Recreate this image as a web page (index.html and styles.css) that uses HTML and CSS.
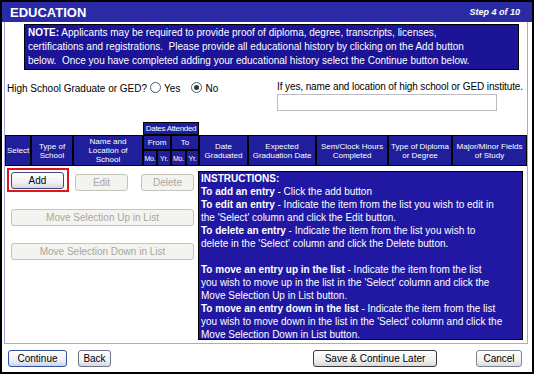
FILE: index.html
```html
<!DOCTYPE html>
<html lang="en">
<head>
  <meta charset="UTF-8">
  <title>Education - Step 4 of 10</title>
  <link rel="stylesheet" href="styles.css">
</head>
<body>
  <div class="frame">
    <div class="title-bar">
      <span class="title">EDUCATION</span>
      <span class="step">Step 4 of 10</span>
    </div>

    <div class="panel">
      <div class="note">
        <b>NOTE:</b> Applicants may be required to provide proof of diploma, degree, transcripts, licenses,<br>
        certifications and registrations.&nbsp; Please provide all educational history by clicking on the Add button<br>
        below.&nbsp; Once you have completed adding your educational history select the Continue button below.
      </div>

      <div class="ged-row">
        <div class="ged-question">
          High School Graduate or GED?<span class="radio"></span>Yes<span class="radio checked"></span>No
        </div>
        <div class="ged-institute">
          <label for="institute">If yes, name and location of high school or GED institute.</label>
          <input type="text" id="institute" class="text-input">
        </div>
      </div>

      <table class="history">
        <colgroup>
          <col style="width:26px"><col style="width:42px"><col style="width:70px">
          <col style="width:14px"><col style="width:14px"><col style="width:15px"><col style="width:13px">
          <col style="width:49px"><col style="width:68px"><col style="width:72px">
          <col style="width:64px"><col style="width:75px">
        </colgroup>
        <tr class="top-row">
          <td colspan="3"></td>
          <th colspan="4" class="dates">Dates Attended</th>
          <td colspan="5"></td>
        </tr>
        <tr class="main-row">
          <th rowspan="2">Select</th>
          <th rowspan="2">Type of<br>School</th>
          <th rowspan="2">Name and<br>Location of<br>School</th>
          <th colspan="2">From</th>
          <th colspan="2">To</th>
          <th rowspan="2">Date<br>Graduated</th>
          <th rowspan="2">Expected<br>Graduation Date</th>
          <th rowspan="2">Sem/Clock Hours<br>Completed</th>
          <th rowspan="2">Type of Diploma<br>or Degree</th>
          <th rowspan="2">Major/Minor Fields<br>of Study</th>
        </tr>
        <tr class="sub-row">
          <th>Mo.</th><th>Yr.</th><th>Mo.</th><th>Yr.</th>
        </tr>
      </table>

      <div class="work-area">
        <div class="actions">
          <div class="action-row">
            <span class="add-highlight"><button class="btn btn-small">Add</button></span>
            <button class="btn btn-small btn-edit" disabled>Edit</button>
            <button class="btn btn-small btn-delete" disabled>Delete</button>
          </div>
          <button class="btn btn-wide" disabled>Move Selection Up in List</button>
          <button class="btn btn-wide" disabled>Move Selection Down in List</button>
        </div>

        <div class="instructions">
          <b>INSTRUCTIONS:</b><br>
          <b>To add an entry</b> - Click the add button<br>
          <b>To edit an entry</b> - Indicate the item from the list you wish to edit in<br>
          the 'Select' column and click the Edit button.<br>
          <b>To delete an entry</b> - Indicate the item from the list you wish to<br>
          delete in the 'Select' column and click the Delete button.<br>
          <br>
          <b>To move an entry up in the list</b> - Indicate the item from the list<br>
          you wish to move up in the list in the 'Select' column and click the<br>
          Move Selection Up in List button.<br>
          <b>To move an entry down in the list</b> - Indicate the item from the list<br>
          you wish to move down in the list in the 'Select' column and click the<br>
          Move Selection Down in List button.
        </div>
      </div>
    </div>

    <div class="footer">
      <button class="btn btn-continue">Continue</button>
      <button class="btn btn-back">Back</button>
      <button class="btn btn-save">Save &amp; Continue Later</button>
      <button class="btn btn-cancel">Cancel</button>
    </div>
  </div>
</body>
</html>
```

FILE: styles.css
```css
body {
  margin: 0;
  background: #fff;
  font-family: 'Liberation Sans', Arial, sans-serif;
  font-size: 10px;
  color: #000;
}

.frame {
  width: 534px;
  height: 374px;
  box-sizing: border-box;
  border: 2px solid #000;
  background: #fff;
}

.title-bar {
  height: 20px;
  background: #2a2aa4;
  color: #fff;
  display: flex;
  align-items: center;
  justify-content: space-between;
  padding: 0 12px 0 8px;
}

.title {
  font-size: 13px;
  font-weight: bold;
}

.step {
  font-size: 9px;
  font-weight: bold;
  font-style: italic;
}

.panel {
  height: 322px;
  box-sizing: border-box;
  margin: 0 4px 0 2px;
  border: 1px solid #aaa6d8;
  border-top: none;
  padding-top: 2px;
}

.note {
  margin: 0 8px 0 19px;
  padding: 1px 3px;
  background: #1c1496;
  border: 1px solid #000;
  color: #fff;
  line-height: 14px;
  white-space: nowrap;
}

.ged-row {
  display: flex;
  height: 52px;
}

.ged-question {
  width: 272px;
  flex-shrink: 0;
  box-sizing: border-box;
  padding: 12px 0 0 2px;
  line-height: 14px;
  white-space: nowrap;
}

.radio {
  display: inline-block;
  width: 9px;
  height: 9px;
  margin: 0 3px 0 3px;
  border: 1px solid #4d5a6e;
  border-radius: 50%;
  background: #fff;
  vertical-align: -1px;
  position: relative;
}

.radio.checked {
  margin-left: 11px;
}

.radio.checked::after {
  content: "";
  position: absolute;
  left: 2px;
  top: 2px;
  width: 5px;
  height: 5px;
  border-radius: 50%;
  background: #2b3b2b;
}

.ged-institute {
  padding-top: 11px;
}

.ged-institute label {
  display: block;
  line-height: 12px;
  letter-spacing: -0.1px;
  white-space: nowrap;
}

.text-input {
  display: block;
  width: 220px;
  height: 17px;
  box-sizing: border-box;
  margin-top: 1px;
  border: 1px solid #bcbcbc;
  padding: 0 2px;
  font: inherit;
}

.history {
  width: 522px;
  table-layout: fixed;
  border-collapse: separate;
  border-spacing: 0;
}

.history th {
  background: #1f1f9c;
  color: #fff;
  border: 1px solid #000;
  font-weight: normal;
  font-size: 8px;
  line-height: 9px;
  padding: 0;
  text-align: center;
  white-space: nowrap;
  overflow: hidden;
}

.history td {
  padding: 0;
}

.history .top-row th,
.history .top-row td {
  height: 11px;
}

.history .dates {
  letter-spacing: -0.3px;
}

.history .main-row th {
  height: 13px;
}

.history .sub-row th {
  height: 14px;
  font-size: 7px;
  letter-spacing: -0.2px;
}

.work-area {
  display: flex;
  padding-top: 2px;
}

.actions {
  width: 193px;
  padding-left: 2px;
  box-sizing: border-box;
  display: flex;
  flex-direction: column;
  align-items: flex-start;
}

.action-row {
  display: flex;
  align-items: flex-end;
}

.add-highlight {
  border: 2px solid #e5141c;
  padding: 2px 3px 1px 2px;
  display: flex;
}

.btn {
  height: 17px;
  padding: 0;
  font-family: 'Liberation Sans', Arial, sans-serif;
  font-size: 10px;
  color: #000;
  border: 1px solid #3c4a78;
  border-radius: 3px;
  background: linear-gradient(#ffffff, #f2f2f6 60%, #d6d6e4);
  cursor: pointer;
}

.btn:disabled {
  color: #a9a79c;
  border-color: #c6c4b8;
  background: #f3f3ef;
  cursor: default;
}

.btn-small {
  width: 53px;
}

.btn-edit {
  margin: 0 0 1px 6px;
}

.btn-delete {
  margin: 0 0 1px 13px;
}

.btn-wide {
  width: 183px;
  margin: 17px 0 0 4px;
}

.instructions {
  width: 325px;
  height: 169px;
  box-sizing: border-box;
  margin-top: 3px;
  padding: 0 2px;
  background: #2018a2;
  border: 1px solid #000;
  color: #fff;
  line-height: 13px;
  white-space: nowrap;
}

.footer {
  display: flex;
  padding: 6px 10px 0 6px;
}

.btn-continue {
  width: 59px;
  border-color: #34509e;
  background: linear-gradient(#ffffff, #eef0f8 60%, #cdd3e8);
}

.btn-back {
  width: 33px;
  margin-left: 11px;
  border-color: #6b7585;
}

.btn-save {
  width: 124px;
  margin-left: auto;
  border-color: #3a3a3a;
  background: linear-gradient(#ffffff, #f0f0f0 60%, #d8d8d8);
}

.btn-cancel {
  width: 46px;
  margin-left: 39px;
  border-color: #7d8490;
  background: linear-gradient(#ffffff, #f2f2f2 60%, #dcdcdc);
}
```
